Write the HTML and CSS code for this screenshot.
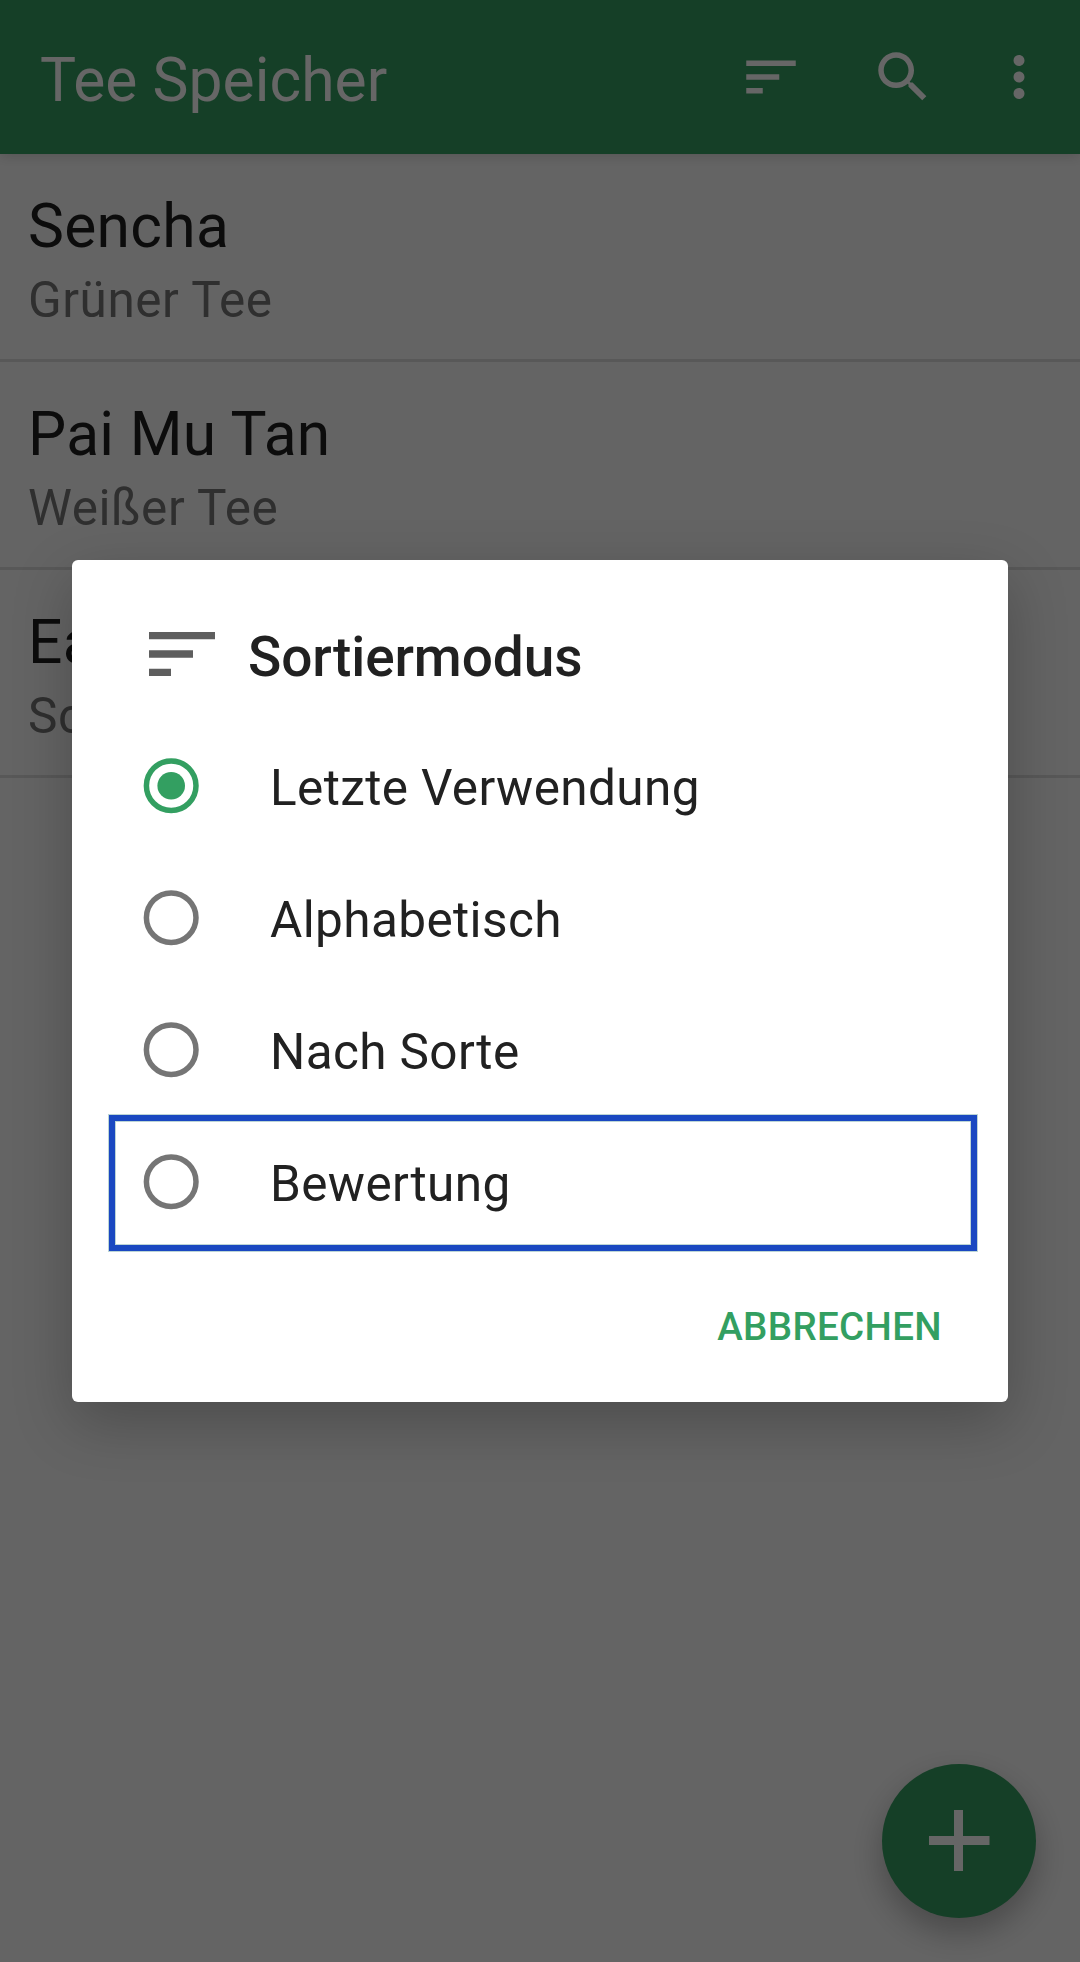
FILE: index.html
```html
<!DOCTYPE html>
<html lang="de">
<head>
<meta charset="utf-8">
<title>Tee Speicher</title>
<link rel="stylesheet" href="styles.css">
</head>
<body>
<div class="screen">
  <header class="toolbar">
    <h1 class="toolbar-title">Tee Speicher</h1>
    <svg class="toolbar-icon sort" viewBox="0 0 24 24"><path d="M3 18h6v-2H3v2zM3 6v2h18V6H3zm0 7h12v-2H3v2z"/></svg>
    <svg class="toolbar-icon search" viewBox="0 0 24 24"><path d="M15.5 14h-.79l-.28-.27C15.41 12.59 16 11.11 16 9.5 16 5.91 13.09 3 9.5 3S3 5.91 3 9.5 5.91 16 9.5 16c1.61 0 3.09-.59 4.23-1.57l.27.28v.79l5 4.99L20.49 19l-4.99-5zm-6 0C7.01 14 5 11.99 5 9.5S7.01 5 9.5 5 14 7.01 14 9.5 11.99 14 9.5 14z"/></svg>
    <svg class="toolbar-icon more" viewBox="0 0 24 24"><path d="M12 8c1.1 0 2-.9 2-2s-.9-2-2-2-2 .9-2 2 .9 2 2 2zm0 2c-1.1 0-2 .9-2 2s.9 2 2 2 2-.9 2-2-.9-2-2-2zm0 6c-1.1 0-2 .9-2 2s.9 2 2 2 2-.9 2-2-.9-2-2-2z"/></svg>
  </header>
  <ul class="teas">
    <li class="tea"><div class="tea-name">Sencha</div><div class="tea-sort">Grüner Tee</div></li>
    <li class="tea"><div class="tea-name">Pai Mu Tan</div><div class="tea-sort">Weißer Tee</div></li>
    <li class="tea"><div class="tea-name">Earl Grey</div><div class="tea-sort">Schwarzer Tee</div></li>
  </ul>
  <div class="fab"><svg class="fab-icon" viewBox="0 0 154 154"><path d="M47 72h25V46h9v26h26.5v9H81v26h-9V81H47z"/></svg></div>
  <div class="scrim">
    <section class="dialog" role="dialog">
      <div class="dialog-head">
        <svg class="dialog-icon" viewBox="0 0 24 24"><path d="M3 18h6v-2H3v2zM3 6v2h18V6H3zm0 7h12v-2H3v2z"/></svg>
        <h2 class="dialog-title">Sortiermodus</h2>
      </div>
      <div class="options">
        <div class="option"><svg class="radio checked" viewBox="0 0 66 66"><circle class="ring" cx="33.2" cy="32.7" r="24.8"/><circle class="dot" cx="33.2" cy="32.7" r="13.8"/></svg><span class="label">Letzte Verwendung</span></div>
        <div class="option"><svg class="radio" viewBox="0 0 66 66"><circle class="ring" cx="33.2" cy="32.7" r="24.8"/></svg><span class="label">Alphabetisch</span></div>
        <div class="option"><svg class="radio" viewBox="0 0 66 66"><circle class="ring" cx="33.2" cy="32.7" r="24.8"/></svg><span class="label">Nach Sorte</span></div>
        <div class="option marked"><svg class="radio" viewBox="0 0 66 66"><circle class="ring" cx="33.2" cy="32.7" r="24.8"/></svg><span class="label">Bewertung</span></div>
      </div>
      <div class="actions"><span class="cancel">ABBRECHEN</span></div>
    </section>
  </div>
</div>
</body>
</html>
```
FILE: styles.css
```css
* { box-sizing: border-box; }
body { margin: 0; font-family: Roboto, sans-serif; }
h1, h2, ul { margin: 0; padding: 0; list-style: none; font-weight: 400; }
.screen {
  position: relative;
  width: 1080px;
  height: 1962px;
  overflow: hidden;
  background: #fafafa;
}

/* Toolbar */
.toolbar {
  position: relative;
  display: flex;
  align-items: center;
  height: 154px;
  padding: 0 28px 0 40px;
  background: #359e61;
  box-shadow: 0 2px 12px rgba(0, 0, 0, .16);
}
.toolbar-title {
  flex: 1;
  padding-top: 8px;
  font-size: 60.5px;
  line-height: 72px;
  letter-spacing: .05px;
  color: #fff;
}
.toolbar-icon { width: 66px; height: 66px; fill: #fff; }
.search { margin-left: 66px; }
.more { margin-left: 50px; }

/* List */
.tea {
  height: 208px;
  padding: 37px 28px 0;
  border-bottom: 3px solid #dcdcdc;
}
.tea-name { font-size: 60.5px; line-height: 72px; letter-spacing: .3px; color: #202020; }
.tea-sort { margin-top: 8px; font-size: 49.5px; line-height: 58px; letter-spacing: .55px; color: #767676; }

.fab {
  position: absolute;
  right: 44px;
  bottom: 44px;
  width: 154px;
  height: 154px;
  border-radius: 50%;
  background: #359e61;
  box-shadow: 0 14px 32px rgba(0, 0, 0, .28);
}
.fab-icon { display: block; width: 154px; height: 154px; fill: #fff; }

/* Dialog */
.scrim {
  position: absolute;
  inset: 0;
  display: flex;
  align-items: center;
  justify-content: center;
  background: rgba(0, 0, 0, .6);
}
.dialog {
  width: 936px;
  height: 842px;
  padding-top: 50px;
  border-radius: 6px;
  background: #fff;
  box-shadow: 0 20px 60px rgba(0, 0, 0, .24);
}
.dialog-head {
  display: flex;
  align-items: center;
  height: 88px;
  padding-left: 66px;
}
.dialog-icon { width: 88px; height: 88px; fill: #5e5e5e; }
.dialog-title {
  padding: 6px 0 0 22px;
  font-size: 55px;
  line-height: 64px;
  font-weight: 500;
  letter-spacing: -.1px;
  color: #212121;
}
.options { margin-top: 22px; }
.option {
  position: relative;
  display: flex;
  align-items: center;
  height: 132px;
  padding-left: 66px;
}
.radio { width: 66px; height: 66px; }
.ring { fill: none; stroke: #757575; stroke-width: 5.5; }
.checked .ring { stroke: #339f61; }
.dot { fill: #339f61; }
.label {
  padding: 4px 0 0 66px;
  font-size: 49.5px;
  line-height: 58px;
  letter-spacing: .38px;
  color: #212121;
}
.marked::after {
  content: "";
  position: absolute;
  left: 37px;
  right: 31px;
  top: -1px;
  bottom: -3px;
  border: 6px solid #1a48c1;
  box-shadow: 0 0 0 1px #bcd5d6, inset 0 0 0 1px #bcd5d6;
}
.actions {
  display: flex;
  justify-content: flex-end;
  padding: 56px 66px 0 0;
}
.cancel {
  font-size: 38.5px;
  line-height: 46px;
  font-weight: 500;
  letter-spacing: .35px;
  color: #339f61;
}
```
